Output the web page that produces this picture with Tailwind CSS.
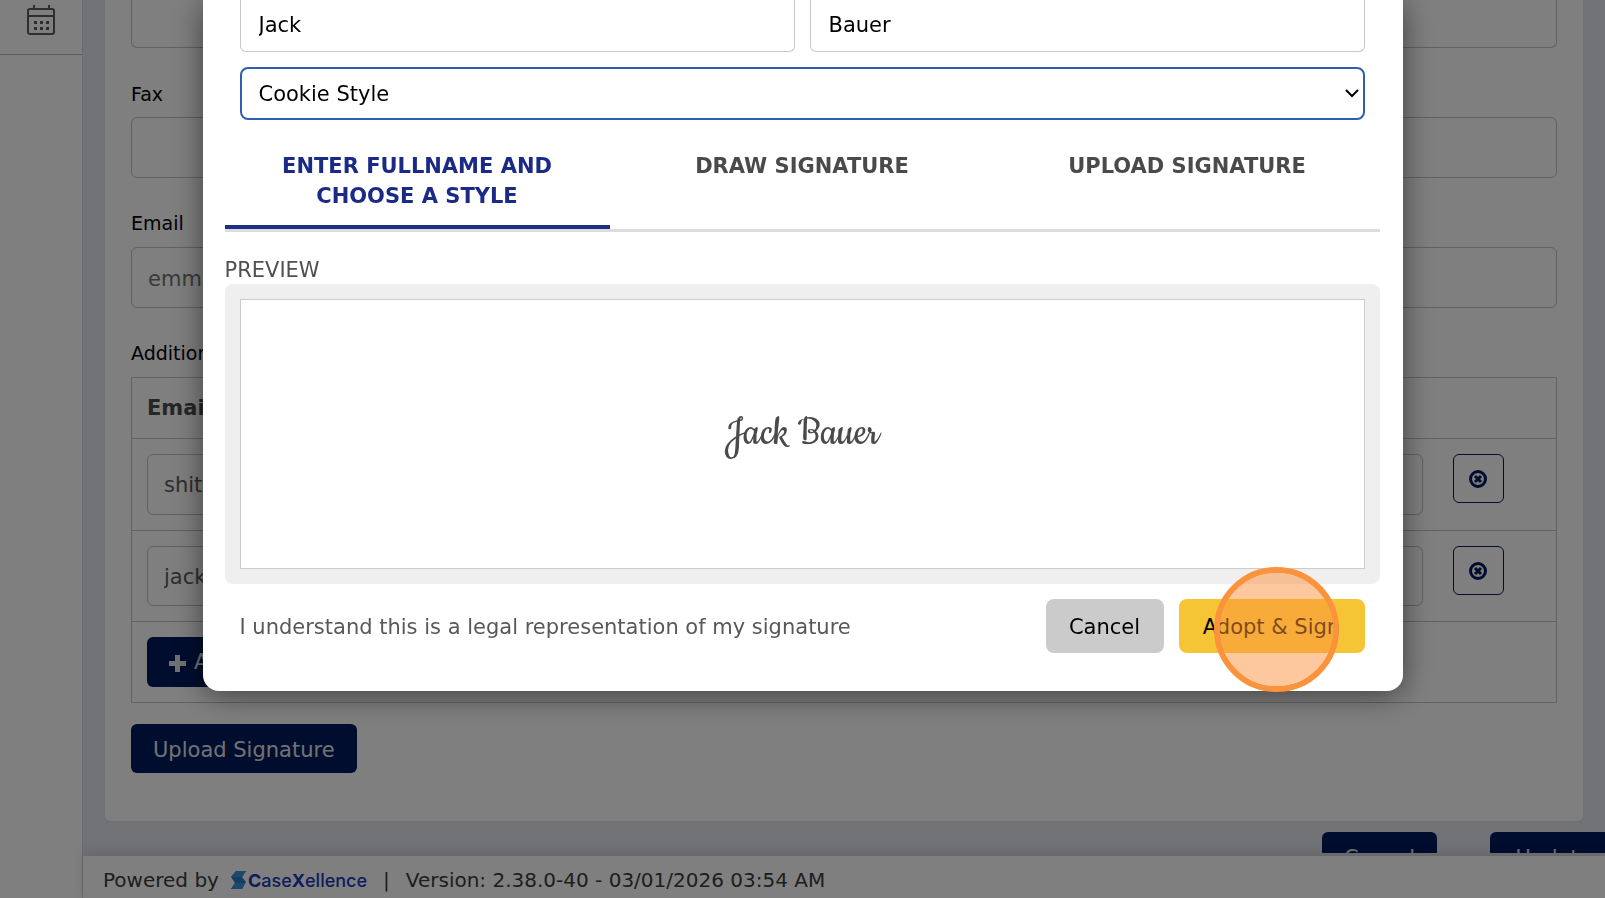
<!DOCTYPE html>
<html lang="en">
<head>
    <meta charset="UTF-8">
    <meta name="viewport" content="width=device-width, initial-scale=1.0">
    <title>CaseXellence - Profile</title>
    <script src="https://cdn.jsdelivr.net/npm/@tailwindcss/browser@4"></script>
</head>
<body class="h-screen overflow-hidden bg-white font-['Verdana','DejaVu_Sans',sans-serif] text-[21px] text-black">
    <div class="flex h-full">
        <!-- Sidebar -->
        <aside class="w-[82px] shrink-0 bg-white">
            <nav class="border-b border-[#bcbcbc]">
                <a href="#" aria-label="Calendar" class="flex h-[54px] justify-center pt-1">
                    <svg class="h-8 w-8" viewBox="0 0 32 32" fill="none" stroke="#5c5c5c" stroke-width="2">
                        <rect x="3" y="5" width="26" height="25" rx="2"/>
                        <path d="M3 12h26M9 1v4M24 1v4"/>
                        <path d="M9 18.500h3M15 18.500h3M21 18.500h3M9 24.500h3M15 24.500h3M21 24.500h3" stroke-width="3"/>
                    </svg>
                </a>
            </nav>
        </aside>

        <div class="flex min-w-0 flex-1 flex-col border-l border-[#d4d6dc] bg-[#e1e5eb]">
            <!-- Profile form -->
            <main class="mb-[3px] min-h-0 flex-1 overflow-hidden">
                <form class="mr-[22px] ml-[22px] rounded-b-md bg-white px-[26px] pb-12">
                    <input type="text" aria-label="Phone" class="block h-12 w-full rounded-b-md border border-t-0 border-[#c4c4c4] px-4">

                    <div class="pt-8">
                        <label for="fax" class="mb-[9px] block text-[19px] leading-7">Fax</label>
                        <input id="fax" type="text" class="block h-[61px] w-full rounded-md border border-[#c4c4c4] px-4">
                    </div>

                    <div class="pt-[31px]">
                        <label for="email" class="mb-[10px] block text-[19px] leading-7">Email</label>
                        <input id="email" type="text" value="emma" class="block h-[61px] w-full rounded-md border border-[#c4c4c4] px-4 pt-0.5 text-[#747474]">
                    </div>

                    <div class="pt-[31px]">
                        <h2 class="mb-[10px] text-[19px] leading-7">Additional Emails</h2>
                        <table class="w-full border-collapse border border-[#c4c4c4] text-left">
                            <thead>
                                <tr class="h-[61px] border-b border-[#c4c4c4]">
                                    <th class="px-[15px] pt-0.5 text-[#4c4c4c]">Email</th>
                                    <th class="w-[119px]"></th>
                                </tr>
                            </thead>
                            <tbody>
                                <tr class="border-b border-[#c4c4c4]">
                                    <td class="p-[15px]">
                                        <input type="text" aria-label="Additional email 1" value="shit" class="block h-[61px] w-full rounded-md border border-[#c4c4c4] px-4 text-[#5c5c5c]">
                                    </td>
                                    <td class="p-[15px] align-top">
                                        <button type="button" aria-label="Remove" class="flex h-[49px] w-[51px] items-center justify-center rounded-md border border-[#001a5c]">
                                            <svg class="h-[18px] w-[18px]" viewBox="0 0 18 18" fill="none" stroke="#001a5c" stroke-width="3">
                                                <circle cx="9" cy="9" r="7.500"/>
                                                <path d="M6 6l6 6M12 6l-6 6"/>
                                            </svg>
                                        </button>
                                    </td>
                                </tr>
                                <tr class="border-b border-[#c4c4c4]">
                                    <td class="p-[15px]">
                                        <input type="text" aria-label="Additional email 2" value="jack" class="block h-[60px] w-full rounded-md border border-[#c4c4c4] px-4 pt-0.5 text-[#5c5c5c]">
                                    </td>
                                    <td class="p-[15px] align-top">
                                        <button type="button" aria-label="Remove" class="flex h-[49px] w-[51px] items-center justify-center rounded-md border border-[#001a5c]">
                                            <svg class="h-[18px] w-[18px]" viewBox="0 0 18 18" fill="none" stroke="#001a5c" stroke-width="3">
                                                <circle cx="9" cy="9" r="7.500"/>
                                                <path d="M6 6l6 6M12 6l-6 6"/>
                                            </svg>
                                        </button>
                                    </td>
                                </tr>
                                <tr>
                                    <td colspan="2" class="p-[15px]">
                                        <button type="button" class="flex h-[50px] items-center gap-2 rounded-md bg-[#001a5c] px-[22px] pt-0.5 text-[#e4e4e4]">
                                            <svg class="h-[17px] w-[17px]" viewBox="0 0 17 17" fill="none" stroke="currentColor" stroke-width="5" stroke-linejoin="round"><path d="M8.500 0v17M0 8.500h17"/></svg>
                                            Add
                                        </button>
                                    </td>
                                </tr>
                            </tbody>
                        </table>
                    </div>

                    <button type="button" class="mt-[21px] block h-[49px] rounded-md bg-[#001a5c] px-[22px] pt-1 text-[#e4e4e4]">Upload Signature</button>
                </form>

                <div class="-mr-3 flex justify-end gap-[53px] pt-[11px]">
                    <button type="button" class="h-[49px] w-[115px] shrink-0 rounded-md bg-[#001a5c] pt-1 text-[#e4e4e4]">Cancel</button>
                    <button type="button" class="h-[49px] w-[127px] shrink-0 rounded-md bg-[#001a5c] pt-1 text-[#e4e4e4]">Update</button>
                </div>
            </main>

            <!-- Footer -->
            <footer class="relative flex h-[42px] shrink-0 items-center bg-white px-5 pt-1.5 text-[20px] text-[#3c3c3c] shadow-[0_-3px_12px_rgba(0,0,0,0.12)]">
                <span>Powered by</span>
                <a href="#" class="ml-3 flex items-center text-[#2038b8]">
                    <svg class="h-[18px] w-[15px]" viewBox="0 0 15 18">
                        <path d="M5 0h10l-4 6 4 5-4 7H0l4-6-4-6z" fill="#2b7cc0"/>
                        <path d="M5 0h10l-4 6H0zM0 18l4-6h10l-3 6z" fill="#3694d8"/>
                    </svg>
                    <span class="ml-0.5 font-[Inter,sans-serif] text-[18px] font-medium"><b class="font-bold">C</b>ase<b class="font-bold">X</b>ellence</span>
                </a>
                <span class="ml-4">|</span>
                <span class="ml-4">Version: 2.38.0-40 - 03/01/2026 03:54 AM</span>
            </footer>
        </div>
    </div>

    <!-- Signature dialog -->
    <div class="fixed inset-0 overflow-hidden bg-black/50">
        <div role="dialog" aria-label="Signature" class="mx-auto max-w-[1200px] rounded-b-2xl bg-white pr-[23px] pb-[38px] pl-[22px] shadow-[0_4px_30px_rgba(0,0,0,0.5)]">
            <div class="px-[15px]">
                <div class="grid grid-cols-2 gap-[15px]">
                    <input type="text" aria-label="First name" value="Jack" class="h-[52px] rounded-b-md border border-t-0 border-[#c8c8c8] px-[18px] pb-0.5">
                    <input type="text" aria-label="Last name" value="Bauer" class="h-[52px] rounded-b-md border border-t-0 border-[#c8c8c8] px-[18px] pb-0.5">
                </div>
                <div class="relative mt-[15px]">
                    <select aria-label="Signature style" class="block h-[53px] w-full appearance-none rounded-lg border-2 border-[#2f5fb0] bg-white px-[17px] pt-0.5 outline-none">
                        <option>Cookie Style</option>
                    </select>
                    <svg class="pointer-events-none absolute top-[22px] right-[6px] h-[9px] w-[14px]" viewBox="0 0 14 9" fill="none" stroke="#000" stroke-width="2"><path d="M1 1l6 6 6-6"/></svg>
                </div>
            </div>

            <div role="tablist" class="mt-[26px] grid h-[86px] grid-cols-3 border-b-3 border-[#dcdcdc] leading-[30px] font-bold text-[#4a4a4a]">
                <button type="button" role="tab" aria-selected="true" class="flex justify-center border-b-4 border-[#1c2f80] px-10 pt-[5px] text-[#1a2a86]">ENTER FULLNAME AND CHOOSE A STYLE</button>
                <button type="button" role="tab" aria-selected="false" class="flex justify-center px-4 pt-[5px]">DRAW SIGNATURE</button>
                <button type="button" role="tab" aria-selected="false" class="flex justify-center px-4 pt-[5px]">UPLOAD SIGNATURE</button>
            </div>

            <p class="pt-6 leading-7 text-[#505050]">PREVIEW</p>
            <div class="rounded-lg bg-[#efefef] p-[15px]">
                <div class="flex h-[270px] items-center justify-center border border-[#cccccc] bg-white font-['Cookie',cursive] text-[45px] text-[#4a4a4a]">Jack Bauer</div>
            </div>

            <div class="mt-[15px] flex items-center gap-[15px] px-[15px]">
                <p class="mr-auto pt-1 text-[#585858]">I understand this is a legal representation of my signature</p>
                <button type="button" class="h-[54px] w-[118px] rounded-lg bg-[#cbcbcb] pt-1">Cancel</button>
                <div class="relative">
                    <button type="button" class="h-[54px] w-[186px] rounded-lg bg-[#f5c535] pt-1">Adopt &amp; Sign</button>
                    <!-- click marker -->
                    <span class="pointer-events-none absolute top-[-32px] left-[35px] size-[125px] rounded-full border-[6px] border-[#fb923c] bg-[#fb923c]/50 bg-clip-padding"></span>
                </div>
            </div>
        </div>
    </div>
</body>
</html>
